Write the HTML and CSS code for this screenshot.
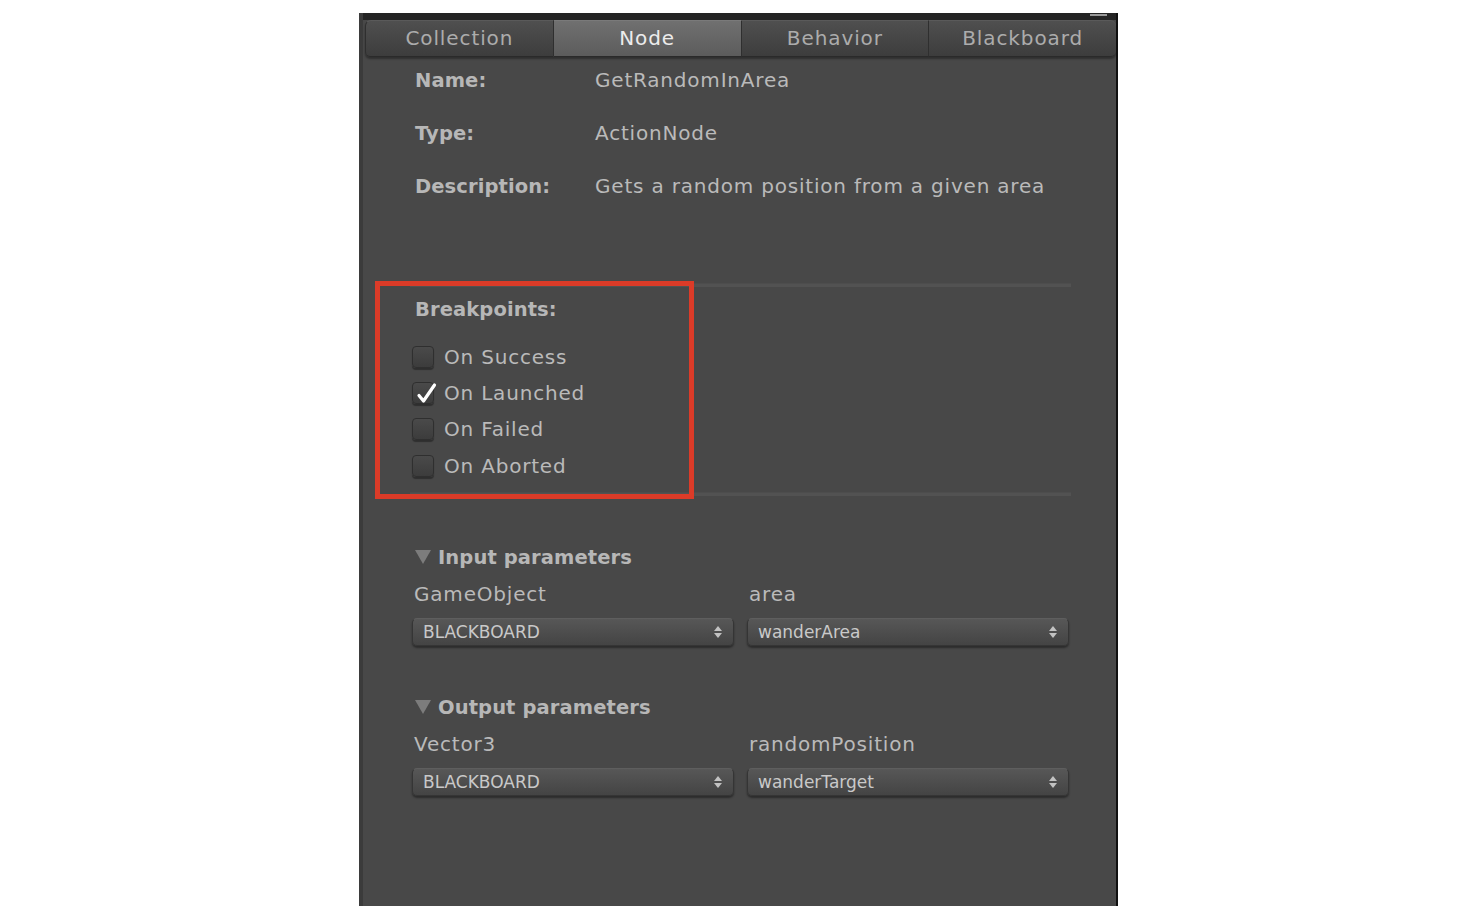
FILE: index.html
```html
<!DOCTYPE html>
<html lang="en">
<head>
    <meta charset="UTF-8">
    <meta name="viewport" content="width=device-width, initial-scale=1.0">
    <title>Node Inspector</title>
    <link rel="stylesheet" href="styles.css">
</head>
<body>

<div class="panel">
    <div class="topbar"><span class="grip"></span></div>

    <div class="tabs">
        <div class="tab">Collection</div>
        <div class="tab active">Node</div>
        <div class="tab">Behavior</div>
        <div class="tab">Blackboard</div>
    </div>

    <div class="content">
        <div class="info-row first">
            <span class="label">Name:</span>
            <span class="value">GetRandomInArea</span>
        </div>
        <div class="info-row">
            <span class="label">Type:</span>
            <span class="value">ActionNode</span>
        </div>
        <div class="info-row">
            <span class="label">Description:</span>
            <span class="value">Gets a random position from a given area</span>
        </div>

        <div class="separator sep-top"></div>

        <div class="section-title">Breakpoints:</div>
        <div class="checks">
            <label class="check-row"><span class="checkbox"></span>On Success</label>
            <label class="check-row"><span class="checkbox checked">
                <svg width="24" height="24" viewBox="0 0 24 24"><path d="M5 13.5 L9.5 19 L20.5 3" fill="none" stroke="#fff" stroke-width="3.2" stroke-linecap="round" stroke-linejoin="round"/></svg>
            </span>On Launched</label>
            <label class="check-row"><span class="checkbox"></span>On Failed</label>
            <label class="check-row"><span class="checkbox"></span>On Aborted</label>
        </div>

        <div class="separator"></div>

        <div class="params first">
            <div class="params-title"><span class="triangle"></span>Input parameters</div>
            <div class="params-grid">
                <div class="param-name">GameObject</div>
                <div class="param-name">area</div>
                <div class="dropdown">BLACKBOARD<span class="arrows"></span></div>
                <div class="dropdown">wanderArea<span class="arrows"></span></div>
            </div>
        </div>

        <div class="params">
            <div class="params-title"><span class="triangle"></span>Output parameters</div>
            <div class="params-grid">
                <div class="param-name">Vector3</div>
                <div class="param-name">randomPosition</div>
                <div class="dropdown">BLACKBOARD<span class="arrows"></span></div>
                <div class="dropdown">wanderTarget<span class="arrows"></span></div>
            </div>
        </div>
    </div>

    <div class="highlight"></div>
</div>

</body>
</html>
```

FILE: styles.css
```css
body {
    margin: 0;
    background-color: #fff;
    font-family: 'DejaVu Sans', Verdana, sans-serif;
}

.panel {
    position: relative;
    margin: 13px 0 0 359px;
    width: 759px;
    height: 893px;
    box-sizing: border-box;
    background-color: #484848;
    border-left: 4px solid #3b3b3b;
    border-right: 2px solid #111;
}

.topbar {
    height: 7px;
    background-color: #242424;
    position: relative;
}

.grip {
    position: absolute;
    right: 9px;
    top: 1px;
    width: 17px;
    height: 2px;
    background-color: #9a9a9a;
}

.tabs {
    display: flex;
    height: 37px;
    margin-left: 2px;
    box-shadow: 0 2px 2px rgba(0, 0, 0, 0.35);
    border-radius: 6px 6px 5px 5px;
}

.tab {
    flex: 1;
    display: flex;
    align-items: center;
    justify-content: center;
    font-size: 20px;
    letter-spacing: 0.9px;
    color: #acacac;
    background: linear-gradient(#4f4f4f, #3d3d3d);
    border-top: 1px solid #5a5a5a;
    border-right: 1px solid #2f2f2f;
    border-bottom: 1px solid #2a2a2a;
    padding-bottom: 1px;
}

.tab:first-child {
    border-radius: 6px 0 0 5px;
    border-left: 1px solid #2f2f2f;
}

.tab:last-child {
    border-radius: 0 6px 5px 0;
    border-right: none;
}

.tab.active {
    color: #ececec;
    background: linear-gradient(#707070, #5c5c5c);
    border-top-color: #7a7a7a;
}

.content {
    padding: 0 47px 0 49px;
}

.info-row {
    display: flex;
    height: 30px;
    align-items: center;
    margin-top: 23px;
    padding-left: 3px;
}

.info-row.first {
    margin-top: 8px;
}

.label {
    width: 180px;
    font-weight: bold;
    font-size: 19.5px;
    letter-spacing: 0.1px;
    color: #b7b7b7;
}

.value {
    font-size: 20px;
    letter-spacing: 0.8px;
    color: #bababa;
}

.separator {
    height: 3px;
    margin: 8px -2px 0 -2px;
    background-color: #525252;
    border-top: 1px solid #4d4d4d;
}

.sep-top {
    margin-top: 82px;
}

.section-title {
    height: 30px;
    line-height: 30px;
    margin-top: 8px;
    padding-left: 3px;
    font-weight: bold;
    font-size: 19.5px;
    letter-spacing: 0.1px;
    color: #b7b7b7;
}

.checks {
    margin-top: 14px;
}

.check-row {
    display: flex;
    align-items: center;
    height: 36px;
    font-size: 20px;
    letter-spacing: 0.8px;
    color: #bababa;
}

.check-row:last-child {
    height: 37px;
    padding-top: 1px;
    box-sizing: border-box;
}

.checkbox {
    position: relative;
    width: 22px;
    height: 22px;
    margin-right: 10px;
    box-sizing: border-box;
    border-radius: 4px;
    border: 1px solid #2f2f2f;
    background: linear-gradient(#4a4a4a, #3c3c3c);
    box-shadow: 0 2px 1px rgba(0, 0, 0, 0.35);
}

.checkbox svg {
    position: absolute;
    left: 1px;
    top: -1px;
}

.params {
    margin-top: 46px;
}

.params.first {
    margin-top: 46px;
}

.params-title {
    display: flex;
    align-items: center;
    height: 30px;
    padding-left: 3px;
    font-weight: bold;
    font-size: 19.5px;
    letter-spacing: 0.1px;
    color: #b7b7b7;
}

.triangle {
    width: 0;
    height: 0;
    margin-right: 7px;
    border-left: 8px solid transparent;
    border-right: 8px solid transparent;
    border-top: 14px solid #7c7c7c;
}

.params-grid {
    display: grid;
    grid-template-columns: 1fr 1fr;
    column-gap: 13px;
    margin-top: 7px;
}

.param-name {
    height: 30px;
    line-height: 30px;
    padding-left: 2px;
    font-size: 20px;
    letter-spacing: 0.8px;
    color: #bababa;
    margin-bottom: 9px;
}

.dropdown {
    position: relative;
    height: 28px;
    line-height: 26px;
    box-sizing: border-box;
    padding-left: 10px;
    font-size: 17px;
    color: #c9c9c9;
    border-radius: 5px;
    border: 1px solid #353535;
    border-top-color: #5e5e5e;
    background: linear-gradient(#575757, #444);
    box-shadow: 0 2px 2px rgba(0, 0, 0, 0.4);
}

.arrows {
    position: absolute;
    right: 11px;
    top: 7px;
    width: 0;
    height: 0;
    border-left: 4px solid transparent;
    border-right: 4px solid transparent;
    border-bottom: 5px solid #c2c2c2;
}

.arrows::after {
    content: "";
    position: absolute;
    left: -4px;
    top: 7px;
    border-left: 4px solid transparent;
    border-right: 4px solid transparent;
    border-top: 5px solid #c2c2c2;
}

.highlight {
    position: absolute;
    left: 12px;
    top: 268px;
    width: 319px;
    height: 218px;
    box-sizing: border-box;
    border: 5px solid #db3b28;
}
```
